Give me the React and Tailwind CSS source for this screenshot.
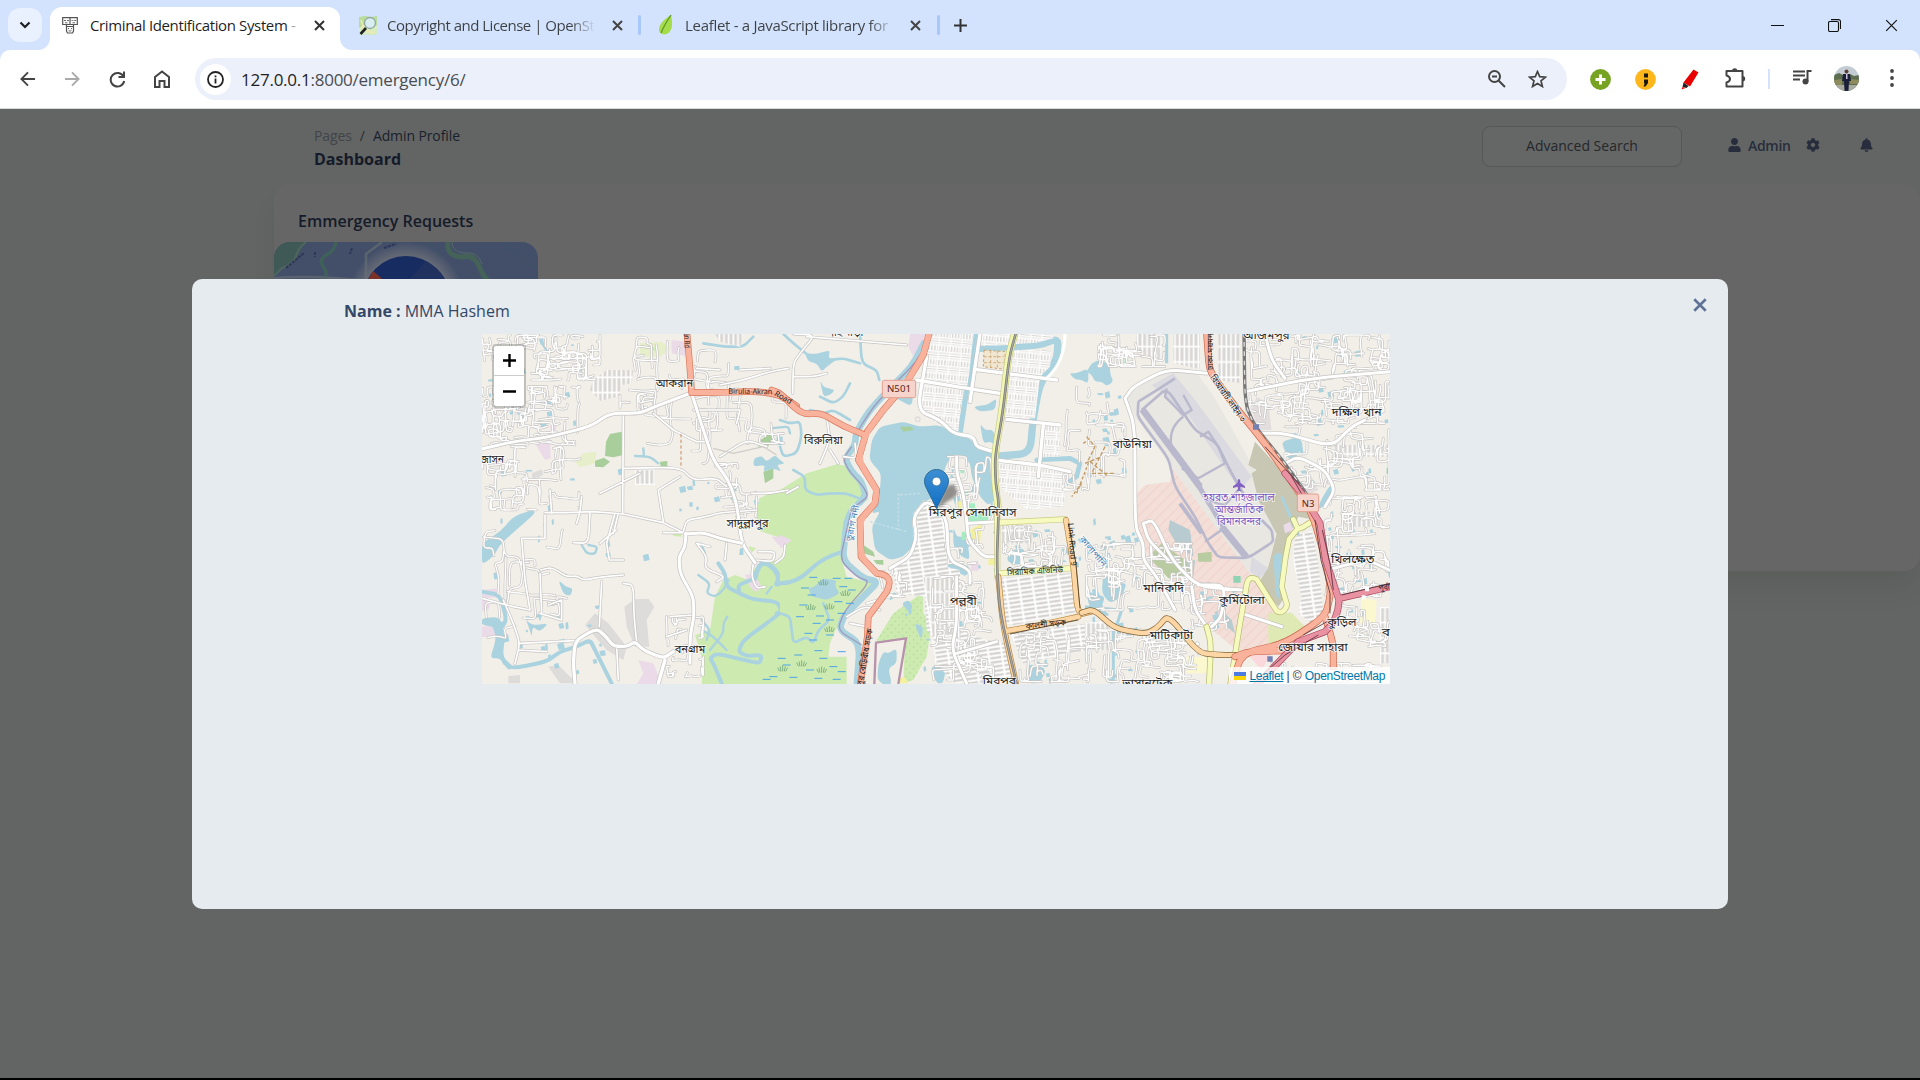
import React from "react";
import { FaUser, FaCog, FaBell } from "react-icons/fa";

/* ---------- deterministic lane generator for the small streets ---------- */
function rng(seed) {
  let s = seed;
  return () => {
    s = (s * 1664525 + 1013904223) % 4294967296;
    return s / 4294967296;
  };
}
function lanes(seed, x0, y0, x1, y1, count, step) {
  const r = rng(seed);
  let d = "";
  for (let i = 0; i < count; i++) {
    let x = x0 + r() * (x1 - x0);
    let y = y0 + r() * (y1 - y0);
    let dir = Math.floor(r() * 4);
    d += `M${x.toFixed(0)} ${y.toFixed(0)}`;
    const n = 3 + Math.floor(r() * 5);
    for (let k = 0; k < n; k++) {
      const len = step * (0.4 + r());
      const j = (r() - 0.5) * step * 0.4;
      if (dir % 2) {
        x += dir === 1 ? len : -len;
        y += j;
      } else {
        y += dir === 0 ? len : -len;
        x += j;
      }
      x = Math.min(x1, Math.max(x0, x));
      y = Math.min(y1, Math.max(y0, y));
      d += `L${x.toFixed(0)} ${y.toFixed(0)}`;
      if (r() < 0.55) dir = (dir + (r() < 0.5 ? 1 : 3)) % 4;
    }
  }
  return d;
}
function ponds(seed, x0, y0, x1, y1, count) {
  const r = rng(seed);
  let d = "";
  for (let i = 0; i < count; i++) {
    const x = x0 + r() * (x1 - x0);
    const y = y0 + r() * (y1 - y0);
    const w = 5 + r() * 14;
    const h = 5 + r() * 16;
    d += `M${x.toFixed(0)} ${y.toFixed(0)}l${w.toFixed(0)} ${(-h / 4).toFixed(0)}l${(w / 4).toFixed(0)} ${h.toFixed(0)}l${(-w).toFixed(0)} ${(h / 5).toFixed(0)}z`;
  }
  return d;
}
/* rounds the corners of straight polylines and polygons */
function soft(d, t = 0.35) {
  return d
    .split("M")
    .filter(Boolean)
    .map((s) => {
      if (/[QHVlhvqACaz]/.test(s)) return "M" + s;
      const closed = s.includes("Z");
      const n = s.match(/-?\d+(\.\d+)?/g).map(Number);
      const p = [];
      for (let i = 0; i + 1 < n.length; i += 2) p.push([n[i], n[i + 1]]);
      if (p.length < 3) return "M" + s;
      const N = p.length;
      const at = (a, b) => `${(a[0] + (b[0] - a[0]) * t).toFixed(1)} ${(a[1] + (b[1] - a[1]) * t).toFixed(1)}`;
      let out = "";
      const from = closed ? 0 : 1;
      const to = closed ? N : N - 1;
      if (!closed) out = `M${p[0][0]} ${p[0][1]}`;
      for (let i = from; i < to; i++) {
        const c = p[i];
        const a = p[(i + N - 1) % N];
        const b = p[(i + 1) % N];
        out += `${out ? "L" : "M"}${at(c, a)}Q${c[0]} ${c[1]} ${at(c, b)}`;
      }
      return out + (closed ? "Z" : `L${p[N - 1][0]} ${p[N - 1][1]}`);
    })
    .join("");
}

const West = ({ children }) => <g transform="translate(-2 -4) scale(.33333)">{children}</g>;
const Mid = ({ children }) => <g transform="translate(298 -4) scale(.33333)">{children}</g>;
const East = ({ children }) => <g transform="translate(603 -4) scale(.33333)">{children}</g>;

const Road = ({ d, w = 6, c = "#fff", k = "#c6c4c2", e = 4 }) => {
  const p = soft(d);
  return (
    <g fill="none" strokeLinejoin="round" strokeLinecap="round">
      <path d={p} stroke={k} strokeWidth={w + e} />
      <path d={p} stroke={c} strokeWidth={w} />
    </g>
  );
};
const Label = ({ x, y, w, children, size = 35, c = "#222", t, halo = "#ffffffcc" }) => (
  <text
    x={x}
    y={y}
    textLength={w}
    lengthAdjust="spacingAndGlyphs"
    fontSize={size}
    fill={c}
    stroke={halo}
    strokeWidth="5"
    paintOrder="stroke"
    transform={t}
  >
    {children}
  </text>
);

const WATER = "#aad3df";
const GREEN = "#cdebb0";
const reeds = [
  [130, 760], [196, 792], [92, 834], [148, 832], [148, 900], [65, 1003], [125, 1022], [8, 1018],
];
const blueDashes = [
  [100, 742], [170, 745], [75, 774], [190, 770], [95, 795], [175, 815], [60, 860], [120, 858], [185, 850],
  [110, 880], [85, 910], [150, 915], [100, 930], [115, 962], [55, 975], [130, 985], [185, 965], [20, 1005],
  [90, 1020], [160, 1010], [185, 1025], [40, 1042], [115, 1045], [170, 1048], [5, 985],
  [205, 745], [215, 780], [210, 820], [150, 870], [70, 825], [-20, 1040], [-40, 1048],
];

function CityMap() {
  return (
    <svg width="908" height="350" viewBox="0 0 908 350" className="block" fontFamily='"Noto Sans Bengali","Noto Sans","Open Sans",sans-serif'>
      <defs>
        <pattern id="gridA" width="34" height="42" patternUnits="userSpaceOnUse" patternTransform="rotate(5)">
          <rect width="34" height="42" fill="#dad8d4" />
          <path d="M0 3H34M3 0V42M12 3V22M21 3V22M30 3V22M3 23H34M3 31H34M3 38H34" stroke="#fff" strokeWidth="4.5" />
        </pattern>
        <pattern id="gridB" width="40" height="13" patternUnits="userSpaceOnUse" patternTransform="rotate(-8)">
          <rect width="40" height="13" fill="#d5d3d0" />
          <path d="M0 4H40M4 0V13" stroke="#fff" strokeWidth="6" />
        </pattern>
        <pattern id="gridC" width="14" height="46" patternUnits="userSpaceOnUse">
          <rect width="14" height="46" fill="#d9d7d3" />
          <path d="M4 0V46M0 4H14" stroke="#fff" strokeWidth="5" />
        </pattern>
        <pattern id="hatch" width="22" height="22" patternUnits="userSpaceOnUse" patternTransform="rotate(45)">
          <rect width="22" height="22" fill="#f3dfd8" />
          <path d="M2 0V22" stroke="#f2cdc8" strokeWidth="2.5" />
        </pattern>
        <pattern id="trees" width="22" height="22" patternUnits="userSpaceOnUse">
          <rect width="22" height="22" fill={GREEN} />
          <circle cx="5" cy="5" r="1.6" fill="#8cbf7c" />
          <circle cx="16" cy="16" r="1.6" fill="#8cbf7c" />
        </pattern>
      </defs>
      <rect width="908" height="350" fill="#f2efe9" />

      {/* land use and water */}
      <West>
        <g fill={GREEN}>
          <path d="M838 505L870 490L935 478V628L895 622L840 603L828 560Z" />
          <path d="M730 750L765 735L800 748L825 715L860 695L900 690L935 640V1080H665L668 990L645 915L690 900L705 800Z" />
          <path d="M576 605L605 600V620L580 618ZM805 648L828 655L815 668Z" />
        </g>
        <path d="M480 40L545 35L570 55L540 80H480ZM285 395L310 370L350 365L345 400L300 412Z" fill="#e6efc9" />
        <path d={soft("M505 35L520 50L535 65L515 60Z")} fill={GREEN} />
        <path d="M390 312L425 305L430 375L400 382L375 378L378 335ZM345 392L372 383L390 395L370 412L345 410ZM540 395L562 393V415L542 412ZM835 335L870 310L882 325L865 348L835 350ZM850 425L880 415V445L855 460Z" fill="#a8cf9b" />
        <g fill="#ebdbe8">
          <path d="M574 30L618 35L615 78L575 70ZM168 345L210 325L212 385L195 390ZM210 285L228 282V305H212ZM875 620L925 620V645L895 645ZM795 735L820 730L848 775L825 785L808 768ZM5 780L50 775L52 802L5 805ZM5 890L45 885L48 915L5 922ZM5 810L35 812L25 840L5 842ZM475 990L520 1000L545 1062H470L490 1030Z" />
        </g>
        <path d="M345 850L385 880L440 950L430 990L380 960L315 885ZM465 808L505 806L523 830L500 870L508 950H465L440 890L433 830ZM205 1010L235 1005L290 1060H240ZM155 430L185 418L190 435L158 448ZM85 1038L120 1035V1060H85Z" fill="#dedcdb" />
        <g fill={WATER}>
          <path d={soft("M5 640L60 605L100 560L160 538L165 550L120 590L80 625L60 645L40 680L5 705Z")} />
          <path d={soft("M5 865L60 860L75 920L68 980L100 1010L85 1022L60 985L30 985L48 930L40 890L5 885Z")} />
          <path d={soft("M235 750L258 770L278 775L272 798L250 792ZM657 625L680 670L675 690ZM822 385L845 378L860 395L885 375L900 390L915 400L890 405L905 425L880 415L850 425L855 405L820 410ZM138 870L150 880L165 885L205 880L180 905L158 890L155 920L148 895ZM300 95L308 100L303 155Z")} />
          <path d="M890 320H908V345H890ZM780 655H790V675H778ZM763 108H778V120H763ZM628 517H638V530H628Z" />
          <path d={ponds(4, 10, 20, 360, 300, 18)} />
          <path d={ponds(18, 590, 450, 830, 540, 10)} />
          <path d={ponds(9, 20, 380, 500, 800, 14)} />
          <path d={ponds(12, 60, 820, 380, 1040, 24)} />
        </g>
        <g fill="none" stroke={WATER} strokeLinejoin="round" strokeLinecap="round">
          <path d="M825 745Q838 680 872 708T890 762L935 758" strokeWidth="15" />
          <path d={soft("M825 745L775 765L778 790L740 770L735 730L715 700M778 790L820 808L890 815L905 840L885 862L790 930L775 965L800 978L845 975L840 1000L790 990L710 970L690 985L700 1000L725 1060M890 850L940 860")} strokeWidth="12" />
          <path d={soft("M655 735L690 760L680 790L705 800L730 780L745 750M665 900L700 920L740 960M690 960L730 910L730 880L742 860M665 870L690 900L680 930M860 790L875 770")} strokeWidth="7" />
          <path d={soft("M5 785L60 795L80 870L60 900M75 1000L100 1015L200 995L240 965L290 950L330 930L345 960L395 1060")} strokeWidth="12" />
          <path d={soft("M305 645L320 670L345 672L352 650L325 645M465 378L510 380L535 400M490 355L492 380M180 30L205 70M875 295L900 292L925 290L930 310")} strokeWidth="7" />
          <path d={soft("M670 40L700 45L740 50L790 50L820 20")} strokeWidth="8" />
        </g>
      </West>
      <Mid>
        <path d="M0 480L80 430L170 403L200 408L260 480L264 510L215 530L200 640L185 690L200 740L280 760L180 870L150 940L145 980L200 980V1080H0V680L20 665L15 640L0 620Z" fill={GREEN} />
        <path d={soft("M85 775L105 770L125 745L170 750L165 770L180 790L140 810L120 805L95 800Z")} fill={WATER} />
        <path d="M290 930L340 850L410 800L412 760L430 762V850L455 880L440 980L400 1050L370 1060L375 925L290 940Z" fill="url(#trees)" />
        <path d={soft("M365 820L385 810L400 830L385 845ZM405 880L430 890L425 930L410 900Z")} fill={WATER} />
        <path d="M390 12L440 12L400 80L385 50Z" fill="#ebdbe8" />
        <g fill={WATER}>
          <path d={soft("M300 290L370 275L420 290L480 285L560 320L600 350L650 370L640 440L655 500L625 525L600 500L575 440L570 400L545 375L520 375L500 400L470 500L430 515L395 570L405 640L370 680L330 690L285 660L275 590L300 545L275 550L300 480L303 430L268 390L275 330Z", 0.25)} />
          <path d={soft("M345 190L400 190L395 230L340 200ZM75 70L110 72L150 60L145 85L175 85L140 110L125 125L110 100L85 95ZM120 150L130 170L145 175L165 180L150 195L130 200ZM868 130L890 130L925 115L925 160L905 150L885 148ZM580 230L620 225L650 205L645 240L600 245ZM600 280L615 300L640 300L655 350L630 335L610 340ZM690 660L735 655L730 700L700 705L680 690ZM500 700L570 705L560 740L530 725L510 730ZM450 1010L500 1000L490 1060L470 1060ZM740 1000L800 1015L780 1060L740 1060ZM520 590L530 620L560 620L570 690L545 680L520 650ZM340 785L355 795L325 815Z")} />
          <path d={ponds(31, 470, 380, 650, 720, 18)} />
          <path d={ponds(32, 700, 580, 925, 720, 18)} />
          <path d={ponds(36, 370, 780, 640, 1050, 14)} />
          <path d={ponds(37, 720, 900, 925, 1050, 8)} />
        </g>
        <path d="M296 940L372 930L350 1060H285Z" fill="#f2efe9" />
        <path d={soft("M310 965L325 970L350 955L350 1000L325 1015L335 1060L320 1070L292 1050L295 1000Z")} fill={WATER} />
        <g fill="none" stroke={WATER} strokeLinejoin="round" strokeLinecap="round">
          <path d={soft("M432 40L395 110L330 175L265 245L228 310L225 345L195 385L215 425L245 455L258 500L215 540L200 575L195 620L188 690L250 745L295 755L250 800L190 860L178 900L240 940L230 1070")} strokeWidth="20" />
          <path d={soft("M590 12L560 180L540 310")} strokeWidth="16" />
          <path d={soft("M600 55L700 50L780 45L835 25L830 90L780 160L760 260L750 370L660 378")} strokeWidth="22" />
          <path d="M770 390L870 385L900 400L890 440L860 460" strokeWidth="14" />
          <path d="M0 760Q50 760 90 720T190 665" strokeWidth="12" />
          <path d={soft("M0 850L30 860L35 900L40 940L80 920L100 940L115 900L150 870L130 820M0 270L30 280L60 275L65 320L50 370L10 380L0 350M40 420L75 440L75 480L110 495L150 490L200 490L250 510M90 240L130 250L160 240L210 270M10 12L40 40L90 80M240 12L245 100L290 120L298 150M150 90L190 85L240 100M120 200L160 220L190 200L210 160")} strokeWidth="8" />
        </g>
        <path d={soft("M448 20L410 95L345 160L280 230L235 300M215 350L190 385L205 420L250 470L265 500L215 536L200 600L180 690L230 740L270 755L195 840L172 900L245 945")} fill="none" stroke="#9d8bb5" strokeWidth="4" opacity=".8" />
        <path d="M360 290H395L400 300L370 305ZM250 645L280 665L285 680L250 670ZM280 690H310V705L290 702Z" fill="#a8cf9b" />
        <circle cx="562" cy="489" r="9" fill="#88e0be" />
        <path d="M565 520H585V575H565ZM600 550H625V575H570ZM545 605H555V630H545ZM670 835H690V850H672ZM540 420H552V430H542Z" fill="#a6ecc2" />
        <path d="M525 515L545 512V540H527ZM570 600L605 580L600 640L575 625ZM625 685H648V705H625ZM690 830H705V845H690ZM355 1045L375 1042L385 1060H355Z" fill="#f3f1a0" />
        <path d="M572 693H595V722H572ZM0 615L35 630L10 650L0 655Z" fill="#ebdbe8" />
      </Mid>
      <East>
        <path d="M118 202L240 118L335 128L390 205L510 420L575 610L555 710L520 745H500L260 410L150 260Z" fill="#e9e7e2" />
        <path d="M510 335L660 500L690 570L640 560L610 620L600 700L590 770L600 800L580 830L520 760L550 710L575 612L520 510L500 430L515 420L490 405Z" fill="#c7c7b4" />
        <path d="M155 490L180 465L255 455L262 415L500 738L590 850L640 880L590 930L470 970L430 940L370 890L330 800L200 700L155 600Z" fill="url(#hatch)" />
        <path d="M550 850L620 848L660 890L600 945L550 940Z" fill="#dfe9b4" />
        <path d="M200 165L265 130L330 210L500 440L465 480L310 255L290 262L240 195Z" fill="#dadae0" />
        <path d="M500 680L550 715L525 745L495 725Z" fill="#dadae0" />
        <g fill="none" stroke="#b9b8cc" strokeLinejoin="round">
          <path d="M172 238L345 470M410 590L485 682" strokeWidth="20" />
          <path d="M330 450L420 600" strokeWidth="14" />
          <path d={soft("M170 240L245 175L330 300L395 340L440 430L480 500M160 215L240 165L270 145M160 215L158 260L250 385L270 470L330 560L370 640L400 682L490 684L565 635L560 600L530 570", 0.2)} strokeWidth="8" />
          <path d="M245 175L240 200L295 255L320 240L295 195M295 260Q240 300 265 375M345 320L370 305L400 350L420 400L340 445L290 415M345 460Q360 520 420 525L460 480M360 635L410 600" strokeWidth="7" />
          <path d="M285 520L350 610" strokeWidth="12" />
        </g>
        <path d="M255 570L315 600L325 680L280 650L250 600ZM280 700L330 690L325 740ZM400 830L440 870L450 910L425 890Z" fill="#b7cbd0" />
        <path d="M230 640L300 690L325 740L250 745L190 680ZM338 670L380 665V695H340Z" fill="#b9cba0" />
        <path d="M445 738H467V758H445ZM905 413H915V432H905Z" fill="#8fd3b4" />
        <path d="M105 70L125 65L133 100L115 110ZM420 108H442V138H420ZM830 820H868V860H840Z" fill="#cfeed2" />
        <path d="M595 585L615 575L625 600L600 610Z" fill="#ebdbe8" />
        <path d="M305 980H370V1030H305ZM830 805L875 810L870 880H825Z" fill="#fbf8d0" />
        <path d="M490 975L560 970L530 1020Z" fill="#fbd8dc" />
        <g fill={WATER}>
          <path d={soft("M5 125L20 100L40 90L75 100L75 130L85 155L65 168L50 155L30 155L20 135ZM565 670L595 670L590 760L578 820L570 760ZM590 335L640 320L655 345L640 370L620 400L600 365ZM55 730L80 735L100 760L125 760L110 800L75 820L50 790ZM0 780L25 790L60 800L50 830L75 860L40 845L20 850ZM735 465L750 480L740 510L700 540L705 515Z")} />
          <path d={ponds(51, 5, 160, 110, 480, 18)} />
          <path d={ponds(52, 600, 20, 910, 460, 30)} />
          <path d={ponds(53, 720, 500, 910, 900, 26)} />
          <path d={ponds(54, 10, 560, 150, 1050, 30)} />
          <path d={ponds(55, 330, 760, 440, 930, 10)} />
        </g>
        <path d="M245 12V100M85 900V1060M0 830L110 840L90 900M590 500L660 660" fill="none" stroke={WATER} strokeWidth="9" />
        <path d="M515 200L550 220L560 300H520L500 240ZM640 470L680 440L700 480L670 495Z" fill="#e3dedd" />
      </East>

      {/* dense street blocks */}
      <West>
        <path d="M340 150L380 120H460L455 160L425 165L415 200L360 212L330 180Z" fill="url(#gridC)" />
        <path d="M465 418H525V465H465ZM705 12H790L780 50L720 35Z" fill="url(#gridC)" />
      </West>
      <Mid>
        <path d="M450 12H580L568 130L560 178L420 155L435 70ZM425 165L548 180L535 305L500 298L412 240ZM600 12H690L685 45L602 48Z" fill="url(#gridA)" />
        <path d="M705 60L815 60L810 110L780 140L765 265L675 265L690 100ZM705 12H820V25L770 38L705 42ZM650 395L865 430L850 530L740 540L670 480L650 450ZM790 285H840V380H780Z" fill="url(#gridA)" />
        <path d="M612 60L675 65V118L610 110Z" fill="#f0e6d2" stroke="#c9a46f" strokeWidth="3" strokeDasharray="8 6" />
        <path d="M632 62V114M652 62V116M612 80H672M612 98H672" stroke="#c9a46f" strokeWidth="2.5" strokeDasharray="8 6" />
        <path d="M400 550L430 510L480 540L505 600L500 710L540 720V900L470 930L440 900L435 800L350 790L340 720L400 660Z" fill="url(#gridB)" />
        <path d="M430 740H530V1000H465L455 880Z" fill="url(#gridC)" />
        <path d="M665 745L870 730L890 845L700 885L675 880ZM455 930L530 900L620 930L680 940L700 1060H520L470 1000ZM690 910L925 880V960L730 1000Z" fill="url(#gridB)" />
        <path d="M665 585H755V640H665Z" fill="url(#gridC)" />
      </Mid>
      <East>
        <path d="M155 12H230V100L150 60ZM265 12H345V118L265 100ZM400 12H465V160L400 150Z" fill="url(#gridC)" />
        <path d="M630 620L680 600L700 700L715 850L680 880L640 850L650 800L625 700Z" fill="url(#gridB)" />
        <path d="M745 345H910V380H760ZM790 545H880V590H780ZM0 880L70 870L75 960L0 960ZM885 830H912V1000H885Z" fill="url(#gridC)" />
      </East>

      {/* lanes */}
      <West>
        <Road d={lanes(3, 8, 15, 360, 150, 38, 26)} w={4} />
        <Road d={lanes(7, 8, 170, 300, 345, 56, 22)} w={4} />
        <Road d={lanes(11, 8, 350, 300, 540, 24, 28)} w={4} />
        <Road d={lanes(13, 420, 20, 610, 240, 12, 30)} w={4} />
        <Road d={lanes(15, 640, 60, 925, 340, 15, 40)} w={4} />
        <Road d={lanes(17, 700, 400, 830, 560, 12, 26)} w={4} />
        <Road d={lanes(21, 10, 600, 260, 950, 14, 40)} w={4} />
        <Road d={lanes(23, 560, 860, 670, 1040, 11, 20)} w={4} />
        <Road d={lanes(27, 440, 180, 690, 400, 5, 44)} w={4} />
        <Road
          w={5}
          d="M195 548H260L340 545L430 552L550 578L610 608M195 555V625H125L135 750L150 840L100 830L5 805M430 250L428 550M405 550L380 640L388 690H430M408 600L360 640M180 730L185 850M182 720L215 712L260 740L290 738L310 750L370 740L430 735M430 760L460 765L462 860L470 935M365 755L358 890M180 850L245 870V810L205 825M430 415L600 412L640 450L710 445L740 470M535 480L550 575M535 480L600 440M360 490L480 430M70 810L100 880L120 940L105 1000M120 940L285 932M115 960L200 965M550 608H610M610 605L620 570L680 560L720 548L830 540M415 550L400 610M210 480L215 550M305 500L300 545L290 580M330 550L325 640L280 638M720 380L800 330L860 350M520 250L580 300L650 335H680M640 240H780L770 280M410 950L415 1050M650 640L680 680L675 715L735 740L710 755M820 700L815 740L830 775L855 770M690 650L650 640M570 860L640 855M560 920L620 900M815 490L870 490L925 480M740 640L735 690M780 120L870 115M720 165L790 150L870 125L925 115M650 115L720 120M885 700L912 680L915 645M835 665L885 665L880 695L830 690"
        />
        <Road w={9} d="M0 358L100 335L200 322L330 290L390 250L480 250L520 232L630 190" />
        <Road w={9} d="M635 190L670 300L700 390L745 450L770 520L785 640L825 698" />
        <Road w={9} d="M615 612L670 608L720 625L785 640M618 610L615 650L597 680L600 730L640 800L642 860L630 920L630 1000" />
        <Road w={10} d="M285 1060L280 1000L285 932L350 895L378 920L400 948L440 950L465 935L490 960L550 985L580 965M555 990L535 1060" />
        <path d="M603 312V415" stroke="#c98b5e" strokeWidth="3" strokeDasharray="10 7" />
        <path d="M700 355L760 370L850 350L890 375" stroke="#cfcbc8" strokeWidth="4" fill="none" />
      </West>
      <Mid>
        <Road w={5} d="M40 12L105 15L60 70L40 100L38 190M80 20L380 45M40 140L100 140L140 130M140 260L150 330L120 400M150 360L175 400M20 490L55 470M200 860L250 830L300 840M210 880L260 890M260 820L330 800M190 380L230 385L225 340" />
        <Road d={lanes(33, 480, 380, 650, 700, 20, 24)} w={4} />
        <Road d={lanes(34, 670, 590, 860, 720, 24, 22)} w={4} />
        <Road d={lanes(35, 450, 740, 640, 1050, 38, 24)} w={4} />
        <Road d={lanes(39, 720, 900, 925, 1055, 26, 26)} w={4} />
        <Road d={lanes(41, 850, 160, 928, 480, 9, 34)} w={4} />
        <Road d={lanes(43, 300, 720, 380, 800, 6, 18)} w={4} />
        <Road w={10} d="M600 12L585 110L570 215M410 150L560 175L660 190M585 118L830 150M680 268L840 285M645 390L780 405L870 425M790 285L775 440M440 80L412 240L480 270L520 310L580 320L590 350L640 365" />
        <Road w={9} d="M530 380L530 430L550 490L560 570L565 630L610 680L645 680M565 580L650 575M330 715L390 680L410 620L400 560L440 510L500 560L505 690L570 720L570 760M530 740L530 880L515 960L560 1060M530 970L650 935" />
        <path d="M855 12Q855 95 800 145" stroke="#fff" strokeWidth="9" fill="none" />
        <circle cx="413" cy="268" r="7" fill="#f2efe9" stroke="#ddd" strokeWidth="4" />
        <path d="M890 490L925 400M905 460L875 500M910 340L925 330" stroke="#c49a63" strokeWidth="4" strokeDasharray="9 6" fill="none" />
        <path d="M355 490V600M270 575L380 605M360 495L420 490" stroke="#c3dfe7" strokeWidth="4" strokeDasharray="8 5" fill="none" />
      </Mid>
      <East>
        <Road d={lanes(61, 485, 15, 912, 280, 96, 24)} w={4} />
        <Road d={lanes(62, 600, 290, 912, 480, 28, 30)} w={4} />
        <Road d={lanes(63, 720, 500, 912, 800, 44, 26)} w={4} />
        <Road d={lanes(64, 5, 640, 320, 840, 52, 26)} w={4} />
        <Road d={lanes(65, 5, 900, 340, 1055, 44, 26)} w={4} />
        <Road d={lanes(66, 320, 760, 430, 900, 12, 26)} w={4} />
        <Road d={lanes(67, 40, 15, 240, 110, 24, 24)} w={4} />
        <Road d={lanes(68, 5, 160, 120, 440, 10, 34)} w={4} />
        <Road d={lanes(69, 560, 1000, 912, 1055, 20, 26)} w={4} />
        <Road d={lanes(70, 770, 820, 912, 950, 12, 24)} w={4} />
        <Road w={9} d="M120 205L145 170L245 118L365 130M120 205L150 290L150 590L175 640L175 690L215 740L270 840M175 580L205 570L260 690L340 770L470 780M175 580L190 630L250 690M320 770L330 840L365 890M480 185L680 145L915 125M540 12L560 90L600 145M520 310L600 310L740 350L800 290L840 270M600 400L640 380L720 420L750 480L720 530M470 850L590 890M340 765L420 765L410 860L380 890M730 720L800 700L850 690L912 720" />
        <path d="M5 320L30 350L10 390L70 440M60 350L20 430H90M0 400L50 380" stroke="#c49a63" strokeWidth="4" strokeDasharray="12 6" fill="none" />
      </East>

      {/* main roads */}
      <West>
        <Road d="M620 0L628 90L635 188M635 188L740 187L830 184L900 195L950 228" w={16} c="#f9b29c" k="#d9775c" />
      </West>
      <Mid>
        <Road d="M705 8L685 80L665 250L643 380L645 460L655 540" w={18} c="#f3f7b4" k="#c9cb83" />
        <Road d="M655 578L855 568M660 730L870 715M652 540L652 740" w={14} c="#f7fabf" k="#c9cb83" />
        <Road d="M858 570L880 700L893 855L940 843M680 903L780 885L895 860M655 740L668 880L710 1070" w={14} c="#fcd6a4" k="#b98a45" />
        <path d="M865 580L888 700L900 835M690 912L780 893L895 870" stroke="#4a3a22" strokeWidth="2.5" fill="none" />
        <path d={soft("M708 8L688 80L668 250L645 380L647 460L657 520L650 700L660 850L712 1070")} stroke="#777" strokeWidth="8" fill="none" />
        <path d={soft("M708 8L688 80L668 250L645 380L647 460L657 520L650 700L660 850L712 1070")} stroke="#a5a5a0" strokeWidth="4" fill="none" />
        <Road d="M448 8L430 75L375 165L310 240L258 310L235 390L290 480L285 520L240 570L243 680L290 730Q345 735 320 785L265 860L262 920L240 1070" w={16} c="#f9b29c" k="#d9775c" />
        <Road d="M-25 180L0 190L50 238L75 252L125 250L190 288L252 314" w={16} c="#f9b29c" k="#d9775c" />
        <path d={soft("M448 8L430 75L375 165L310 240L258 310L235 390L290 480L285 520L240 570L243 680L290 730")} fill="none" stroke="#f9b29c" strokeWidth="16" />
        <path d="M283 1062L288 938L378 925L355 1062" fill="none" stroke="#b793ab" strokeWidth="7" />
        <rect x="307" y="151" width="100" height="52" rx="6" fill="#f6d3cb" stroke="#e3a08f" strokeWidth="3" />
        <text x="321" y="187" fontSize="29" textLength="72" lengthAdjust="spacingAndGlyphs" fill="#5a2616">N501</text>
      </Mid>
      <East>
        <Road d="M625 568L640 600L680 575M635 600L612 628L602 680L590 770L606 825Q595 855 575 843L515 748Q490 735 485 765L465 880L435 1070M365 890L378 940L372 1070" w={14} c="#f7fabf" k="#b5b76f" />
        <Road d="M-10 848L25 838L90 895L180 912L215 895L250 855L340 968L400 975L460 975" w={14} c="#fcd6a4" k="#806536" />
        <path d={soft("M477 8L480 220L510 290L600 400L670 500")} stroke="#777" strokeWidth="10" fill="none" />
        <path d={soft("M477 8L480 220L510 290L600 400L670 500")} stroke="#ddd" strokeWidth="4" strokeDasharray="14 14" fill="none" />
        <Road d="M365 8L372 110L385 140L450 230L540 340L610 440L680 545L725 700L738 790L720 860L600 940L470 970L440 1070M720 860L745 940L745 1010M450 980L490 965L600 962" w={17} c="#f9b29c" k="#c9694c" />
        <Road d="M600 430L650 490L705 580L722 690L762 810Q760 870 720 905L640 935L510 1070M765 805L925 768" w={17} c="#e892a2" k="#a8425c" />
        <path d="M690 570L708 690L735 790V850M712 600L735 700L745 780M620 440L655 500M540 350L650 470M655 915L735 870M520 1045L600 975L700 915M770 795L915 760" stroke="#503138" strokeWidth="2.5" fill="none" />
        <path d="M840 770H852V784H840ZM830 796H842V808H830Z" fill="#fff" />
        <path d="M504 283H522V299H504ZM547 979H563V995H547Z" fill="#7380b0" />
        <rect x="637" y="492" width="64" height="53" rx="5" fill="#f6d3cb" stroke="#e3a08f" strokeWidth="3" />
        <text x="650" y="531" fontSize="29" textLength="38" lengthAdjust="spacingAndGlyphs" fill="#5a2616">N3</text>
        <path d="M462 447Q466 447 466 458L480 469V474L466 470L465 478L470 484L462 482L454 484L459 478L458 470L444 474V469L458 458Q458 447 462 447Z" fill="#8461c4" />
      </East>

      {/* wetland symbols */}
      <Mid>
        {blueDashes.map(([x, y]) => (
          <path key={`${x}-${y}`} d={`M${x - 12} ${y}h24`} stroke="#4aa3e8" strokeWidth="3" />
        ))}
        {reeds.map(([x, y]) => (
          <path key={`${x}-${y}`} d={`M${x} ${y + 6}v-18M${x + 5} ${y + 6}l3 -15M${x - 5} ${y + 6}l-3 -15M${x + 9} ${y + 6}l6 -11M${x - 9} ${y + 6}l-6 -11`} stroke="#6fa57a" strokeWidth="2.5" />
        ))}
      </Mid>

      {/* place names */}
      <West>
        <Label x={527} y={170} w={112}>আকরান</Label>
        <Label x={0} y={398} w={72}>জাসন</Label>
        <Label x={740} y={592} w={126}>সাদুল্লাপুর</Label>
        <Label x={584} y={968} w={92}>বনগ্রাম</Label>
        <Label x={0} y={0} w={52} size={23} halo="none" t="translate(612 2) rotate(88)">ran Rd</Label>
        <Label x={745} y={191} w={132} size={23} halo="none" t="rotate(1 745 191)">Birulia-Akran</Label>
        <Label x={0} y={0} w={56} size={23} halo="none" t="translate(882 195) rotate(30)">Road</Label>
      </West>
      <Mid>
        <Label x={140} y={17} w={110}>শাহপাড়া</Label>
        <Label x={72} y={343} w={116}>বিরুলিয়া</Label>
        <Label x={446} y={559} w={264}>মিরপুর সেনানিবাস</Label>
        <Label x={510} y={824} w={80}>পল্লবী</Label>
        <Label x={608} y={1064} w={100}>মিরপুর</Label>
        <Label x={682} y={736} w={168} size={26} halo="none" t="rotate(-3 682 736)">সিরামিক এভিনিউ</Label>
        <Label x={738} y={898} w={122} size={26} halo="none" t="rotate(-6 738 898)">কালশী সড়ক</Label>
        <Label x={0} y={0} w={128} size={24} halo="none" t="translate(864 580) rotate(86)">Link Road 9</Label>
        <Label x={0} y={0} w={110} size={26} c="#4d80b3" t="translate(215 635) rotate(-78)">তুরাগ নদী</Label>
        <Label x={0} y={0} w={175} size={26} halo="none" t="translate(248 1070) rotate(-80)">পুর বেড়িবাঁধ সড়ক</Label>
      </Mid>
      <East>
        <Label x={474} y={28} w={140}>আজমপুর</Label>
        <Label x={740} y={257} w={150}>দক্ষিণ খান</Label>
        <Label x={83} y={355} w={118}>বাউনিয়া</Label>
        <Label x={738} y={698} w={130}>খিলক্ষেত</Label>
        <Label x={175} y={786} w={122}>মানিকদি</Label>
        <Label x={402} y={822} w={137}>কুর্মিটোলা</Label>
        <Label x={194} y={926} w={130}>মাটিকাটা</Label>
        <Label x={727} y={887} w={87}>কুড়িল</Label>
        <Label x={580} y={962} w={208}>জোয়ার সাহারা</Label>
        <Label x={890} y={919} w={50}>বসু</Label>
        <Label x={112} y={1070} w={150}>ভাসানটেক</Label>
        <Label x={355} y={512} w={214} size={32} c="#7a55c0">হযরত শাহজালাল</Label>
        <Label x={389} y={548} w={146} size={32} c="#7a55c0">আন্তর্জাতিক</Label>
        <Label x={396} y={584} w={132} size={32} c="#7a55c0">বিমানবন্দর</Label>
        <Label x={0} y={0} w={110} size={24} halo="none" t="translate(383 120) rotate(-90)">ঢাকা-ময়মন</Label>
        <Label x={0} y={0} w={165} size={26} t="translate(374 142) rotate(55)">বিআরটি লাইন ৩</Label>
        <Label x={0} y={0} w={110} size={26} c="#4d80b3" t="translate(-18 628) rotate(50)">কালাপানি</Label>
        <Label x={882} y={783} w={60} size={26} halo="none" t="rotate(-8 882 783)">পূর্বাচল</Label>
      </East>

      {/* location marker */}
      <defs>
        <filter id="shade" x="-50%" y="-50%" width="200%" height="200%"><feGaussianBlur stdDeviation="1.5" /></filter>
        <linearGradient id="pin" x1="0" y1="0" x2="0" y2="1"><stop offset="0" stopColor="#3d8fd1" /><stop offset="1" stopColor="#126fc6" /></linearGradient>
      </defs>
      <path d="M455 175L462 156Q470 146 474 154T466 167Z" fill="#000" opacity=".4" filter="url(#shade)" />
      <g transform="translate(442 135)">
        <path d="M12.500.5C5.800.5.500 5.900.500 12.400c0 2.600 1 4.900 2.200 7.300L12.500 39.500l9.800-19.800c1.200-2.400 2.200-4.700 2.200-7.300C24.500 5.900 19.200.5 12.500.5Z" fill="url(#pin)" stroke="#2e6c97" />
        <circle cx="12.500" cy="12.500" r="4.300" fill="#fff" stroke="#2e6c97" strokeWidth=".6" />
      </g>
    </svg>
  );
}

/* ---------- browser chrome ---------- */
const X = ({ c = "#333", s = 11, w = 2 }) => (
  <svg width={s} height={s} viewBox="0 0 11 11" className="shrink-0">
    <path d="M1 1L10 10M10 1L1 10" stroke={c} strokeWidth={w} fill="none" />
  </svg>
);

const FaceIcon = () => (
  <svg width="16" height="17" viewBox="0 0 16 17" className="shrink-0" fill="none" stroke="#555" strokeWidth="1.200">
    <path d="M.7.700H15.300V7.500H.7ZM8 .7V7.500M4.500 9.500H11.500V14L10.500 16H5.500L4.500 14ZM4.500 9.500V7.500M11.500 9.500V7.500" />
    <path d="M2 4L3 3L4 4M5 4L6 3L6.800 4M9.500 4L10.500 3L11.300 4M12.300 4L13.200 3L14 4M3 5.800H5.500M10.500 5.800H13M6 11.500H7M9 11.500H10M6.500 13.300L8 14.300L9.500 13.300" strokeWidth=".9" />
  </svg>
);
const OsmIcon = () => (
  <svg width="18" height="19" viewBox="0 0 18 19" className="shrink-0">
    <path d="M0 1L6 0L12 1L18 0V18L12 19L6 18L0 19Z" fill="#b9dd9a" />
    <path d="M0 12L6 8L12 12L18 9V18L12 19L6 18L0 19Z" fill="#d9ecc0" />
    <path d="M2 4L5 14L15 17" stroke="#f3e9b0" strokeWidth="1.500" fill="none" />
    <path d="M1.500 18L7 12" stroke="#222" strokeWidth="2.600" />
    <circle cx="11" cy="7" r="5.500" fill="#d8eef3" stroke="#8fa8a2" strokeWidth="1.300" />
  </svg>
);
const LeafIcon = () => (
  <svg width="15" height="20" viewBox="0 0 15 20" className="shrink-0">
    <path d="M13 0C14.500 6 15 13 11.500 17C8.500 20.500 3.500 20 1.500 17C-1 11 6 4 13 0Z" fill="#a4dc4a" />
    <path d="M13 0C9 6 5.500 12 3 18" stroke="#5f9a2b" strokeWidth="1.300" fill="none" />
  </svg>
);

function TabStrip() {
  return (
    <div className="flex h-[50px] bg-[#d3e3fd] pl-2">
      <button className="mt-2 flex h-[34px] w-[34px] items-center justify-center rounded-xl bg-[#e9f0fe]">
        <svg width="12" height="8" viewBox="0 0 12 8"><path d="M1.500 1.500L6 6L10.500 1.500" stroke="#1f1f1f" strokeWidth="2.200" fill="none" /></svg>
      </button>
      <div className="relative ml-2 mt-[7px] flex h-[43px] w-[290px] items-center rounded-t-xl bg-white pb-[6px] pl-3 pr-[15px]">
        <svg width="12" height="12" className="absolute -left-3 bottom-0"><path d="M12 0V12H0A12 12 0 0 0 12 0Z" fill="#fff" /></svg>
        <svg width="12" height="12" className="absolute -right-3 bottom-0"><path d="M0 0V12H12A12 12 0 0 1 0 0Z" fill="#fff" /></svg>
        <FaceIcon />
        <span className="ml-3 w-[212px] overflow-hidden whitespace-nowrap text-[15px] tracking-[-0.37px] text-[#1f1f1f]">
          Criminal Identification System <span className="text-[#aaa]">-</span>
        </span>
        <span className="ml-auto"><X /></span>
      </div>
      <div className="mt-[7px] flex h-[36px] w-[301px] items-center pl-[19px]">
        <OsmIcon />
        <span className="ml-[10px] w-[208px] overflow-hidden whitespace-nowrap bg-gradient-to-r from-[#3c4043] from-88% to-[#d3e3fd] to-100% bg-clip-text text-[15px] tracking-[-0.5px] text-transparent">
          Copyright and License | OpenStr
        </span>
        <span className="ml-[17px]"><X c="#444" /></span>
        <span className="ml-auto h-5 w-[3px] rounded bg-[#a8c7fa]" />
      </div>
      <div className="mt-[7px] flex h-[36px] w-[299px] items-center pl-[17px]">
        <LeafIcon />
        <span className="ml-[12px] w-[209px] overflow-hidden whitespace-nowrap bg-gradient-to-r from-[#3c4043] from-88% to-[#d3e3fd] to-100% bg-clip-text text-[15px] tracking-[-0.3px] text-transparent">
          Leaflet - a JavaScript library for
        </span>
        <span className="ml-[16px]"><X c="#444" /></span>
        <span className="ml-auto h-5 w-[3px] rounded bg-[#a8c7fa]" />
      </div>
      <svg width="13" height="13" viewBox="0 0 13 13" className="ml-[14px] mt-[19px]"><path d="M6.500 0V13M0 6.500H13" stroke="#333" strokeWidth="2" /></svg>
      <div className="ml-auto mr-[22px] flex items-center gap-[44px]">
        <svg width="13" height="13"><path d="M0 6.500H13" stroke="#111" /></svg>
        <svg width="13" height="13" fill="none" stroke="#111" strokeWidth="1.100"><rect x=".5" y="2.500" width="10" height="10" rx="1.500" /><path d="M3 .6H10.500Q12.500.6 12.500 2.600V10" /></svg>
        <X s={13} w={1} c="#111" />
      </div>
    </div>
  );
}

function Toolbar() {
  return (
    <div className="bg-[#d3e3fd]">
      <div className="flex h-[59px] items-center rounded-t-[10px] border-b border-[#d5d9d8] bg-white pl-[20px]">
        <svg width="16" height="16" viewBox="0 0 17 16" fill="none" stroke="#444" strokeWidth="2"><path d="M16 8H2M8.500 1L1.500 8L8.500 15" /></svg>
        <svg width="16" height="16" viewBox="0 0 17 16" fill="none" stroke="#aaa" strokeWidth="2" className="ml-[28px]"><path d="M1 8H15M8.500 1L15.500 8L8.500 15" /></svg>
        <svg width="17" height="17" viewBox="0 0 17 17" fill="none" stroke="#444" strokeWidth="2" className="ml-[29px]"><path d="M14.500 5.500A6.800 6.800 0 1 0 15.200 10M15 .5V6H9.500" /></svg>
        <svg width="16" height="18" viewBox="0 0 16 18" fill="none" stroke="#444" strokeWidth="2" className="ml-[28px]"><path d="M1 7L8 1.500L15 7V17H10.500V11H5.500V17H1Z" /></svg>
        <div className="ml-[25px] flex h-[42px] w-[1372px] items-center rounded-full bg-[#ecf0fa] pl-[5px] pr-[20px]">
          <span className="flex h-[31px] w-[31px] items-center justify-center rounded-full bg-white">
            <svg width="17" height="17" viewBox="0 0 17 17" fill="none" stroke="#222" strokeWidth="1.800"><circle cx="8.500" cy="8.500" r="7.500" /><path d="M8.500 7.500V12.500M8.500 4.500V6.300" /></svg>
          </span>
          <span className="ml-[10px] mt-px text-[17px] tracking-[-0.25px] text-[#4a4d50]"><span className="text-[#1f1f1f]">127.0.0.1</span>:8000/emergency/6/</span>
          <svg width="18" height="18" viewBox="0 0 18 18" fill="none" stroke="#444" strokeWidth="2" className="ml-auto"><circle cx="6.500" cy="6.500" r="5.500" /><path d="M10.500 10.500L17 17M4 6.500H9" /></svg>
          <svg width="19" height="18" viewBox="0 0 19 18" fill="none" stroke="#444" strokeWidth="1.700" className="ml-[22px]"><path d="M9.500 1.500L11.700 6.600L17.500 7.100L13 10.800L14.400 16.500L9.500 13.500L4.600 16.500L6 10.800L1.500 7.100L7.300 6.600Z" /></svg>
        </div>
        <svg width="21" height="21" className="ml-[23px]"><circle cx="10.500" cy="10.500" r="10.400" fill="#77a323" /><path d="M10.500 5.500V15.500M5.500 10.500H15.500" stroke="#fff" strokeWidth="3" /></svg>
        <svg width="21" height="21" className="ml-6"><circle cx="10.500" cy="10.500" r="10.400" fill="#fdb71d" /><path d="M9 4.500H13V8.500H9ZM9 10.500H13V14L10.500 17.500H8.500L9.800 14.500H9Z" fill="#1c1809" /></svg>
        <svg width="18" height="21" viewBox="0 0 18 21" className="ml-[25px]"><path d="M12.500.5L17.500 3.500L9 17.500L2.500 13.500Z" fill="#e80000" /><path d="M2.500 13.500L7.500 17L5.500 19L1.500 18Z" fill="#222" /><path d="M1.500 18L4.500 19L.5 20.500Z" fill="#e80000" /></svg>
        <svg width="21" height="21" viewBox="0 0 21 21" fill="none" stroke="#444" strokeWidth="2" className="ml-[26px] mb-1"><path d="M1.500 4H17.500V19.500H1.500V15.500Q5 14.500 5 12T1.500 8.500Z" strokeLinejoin="round" /><path d="M7 4A2.700 2.700 0 0 1 12.400 4ZM17.500 9A2.700 2.700 0 0 1 17.500 14.400Z" fill="#444" stroke="none" /></svg>
        <span className="ml-[22px] h-5 w-[2px] bg-[#d3e3fd]" />
        <svg width="19" height="15" viewBox="0 0 19 15" className="ml-[23px] mb-1"><path d="M0 1.500H12M0 5.500H12M0 9.500H7" stroke="#444" strokeWidth="1.800" /><path d="M14.500 11.500V1H18.500" stroke="#444" strokeWidth="2" fill="none" /><circle cx="12.500" cy="11.500" r="3" fill="#444" /></svg>
        <svg width="25" height="25" viewBox="0 0 25 25" className="ml-[22px] mb-[2px]">
          <clipPath id="av"><circle cx="12.500" cy="12.500" r="12.500" /></clipPath>
          <g clipPath="url(#av)">
            <rect width="25" height="25" fill="#c3ccd2" />
            <path d="M0 9L5 7L9 9L16 8L20 10L25 9V25H0Z" fill="#5d6e50" />
            <path d="M0 14L8 13V19H0ZM16 13L25 14V18H16Z" fill="#8d8a5c" />
            <path d="M0 19H25V25H0Z" fill="#a9aba3" />
            <path d="M9 8H16L17 15H15L14.500 25H10.500L10 15H8Z" fill="#1b2038" />
            <circle cx="12.500" cy="5.500" r="2" fill="#5c4038" />
            <path d="M12 8H13.500V13H12Z" fill="#cdbfd8" />
          </g>
        </svg>
        <svg width="4" height="18" className="ml-[31px] mb-[2px]" fill="#444"><circle cx="2" cy="2" r="1.900" /><circle cx="2" cy="9" r="1.900" /><circle cx="2" cy="16" r="1.900" /></svg>
      </div>
    </div>
  );
}

/* ---------- page below the dialog ---------- */
function Dashboard() {
  return (
    <div className="pl-[274px] font-['Open_Sans',sans-serif]">
      <header className="flex h-[75px] items-start pl-10 pr-[47px]">
        <div className="pt-[17px] text-[#16191f]">
          <div className="flex h-5 items-center gap-2 text-sm tracking-[-0.1px]"><span className="text-[#41444a]">Pages</span><span className="text-[#292c33]">/</span><span className="text-[#191f2d]">Admin Profile</span></div>
          <h6 className="mt-[2px] text-base font-bold leading-[22px] text-[#151b29]">Dashboard</h6>
        </div>
        <button className="ml-auto mt-[17px] h-[41px] w-[200px] rounded-lg border border-[#545858] bg-[#656666] pb-[2px] text-sm text-[#24282b]">Advanced Search</button>
        <div className="ml-[46px] mt-[26px] flex h-5 items-center text-[14px] font-semibold text-[#272d3c]">
          <FaUser className="h-[14px] w-[13px]" />
          <span className="ml-[7px] w-[42px] tracking-[-0.3px]">Admin</span>
          <FaCog className="ml-4 h-[14px] w-[14px]" />
          <FaBell className="ml-10 h-[14px] w-[13px]" />
        </div>
      </header>
      <section className="h-[387px] rounded-2xl bg-[#666] pt-[26px] shadow-[0_20px_27px_0_rgba(0,0,0,0.06)]">
        <h6 className="pl-6 text-base font-semibold leading-[22px] text-[#151b29]">Emmergency Requests</h6>
        <svg width="264" height="150" viewBox="0 0 264 150" className="mt-[10px] rounded-2xl">
          <defs>
            <radialGradient id="glow"><stop offset=".7" stopColor="#6d7078" /><stop offset="1" stopColor="#6d7078" stopOpacity="0" /></radialGradient>
          </defs>
          <rect width="264" height="150" fill="#434f69" />
          <path d="M0 0H30Q26 16 14 22T0 36Z" fill="#3f5956" />
          <g fill="none" strokeLinejoin="round">
            <path d="M32 0Q24 6 22 14T8 26L0 34" stroke="#4f665f" strokeWidth="2" />
            <path d="M62 0Q60 10 52 13Q44 18 50 26T46 38" stroke="#40605a" strokeWidth="3.500" />
            <path d="M108 0L92 12V40M0 36Q30 34 60 36T92 38" stroke="#59646f" strokeWidth="2.500" />
            <path d="M174 0Q172 14 188 15Q200 12 205 24T214 38" stroke="#456259" strokeWidth="5" />
            <path d="M178 0Q178 10 190 11Q204 9 208 22" stroke="#57696a" strokeWidth="1" />
            <path d="M226 0L264 28M142 0V16M156 0Q158 10 168 14" stroke="#3d5564" />
          </g>
          <circle cx="132" cy="58" r="58" fill="url(#glow)" />
          <circle cx="132" cy="57" r="43" fill="#172c60" />
          <path d="M152 19L118 56H175Q176 32 152 19Z" fill="#20315f" />
          <path d="M99 29L112 40L90 60V45Z" fill="#7b3028" />
          <path d="M12 26L30 11M78 6L76 12M41 10V15M110 6L122 2" stroke="#2d3658" strokeWidth="2" strokeDasharray="3 1" />
        </svg>
      </section>
    </div>
  );
}

function MapDialog() {
  return (
    <div role="dialog" className="absolute left-[192px] top-[170px] h-[630px] w-[1536px] rounded-[10px] bg-[#e6ebef] font-['Open_Sans',sans-serif]">
      <div className="flex h-[55px] items-start justify-between pl-[152px] pr-[21px] pt-[20px]">
        <p className="text-base leading-6 text-[#344767]"><b>Name :</b> MMA Hashem</p>
        <span className="mt-[-1px]"><X s={14} c="#5f7196" w={2} /></span>
      </div>
      <div className="relative ml-[290px] h-[350px] w-[908px] overflow-hidden">
        <CityMap />
        <div className="absolute left-[10px] top-[10px] flex w-[34px] flex-col overflow-hidden rounded border-2 border-black/20 bg-white bg-clip-padding">
          <button className="flex h-[30px] items-center justify-center border-b border-[#ccc]">
            <svg width="13" height="13"><path d="M6.500 0V13M0 6.500H13" stroke="#000" strokeWidth="2.400" /></svg>
          </button>
          <button className="flex h-[30px] items-center justify-center pl-px">
            <svg width="13" height="3"><path d="M0 1.500H13" stroke="#000" strokeWidth="2.400" /></svg>
          </button>
        </div>
        <div className="absolute bottom-0 right-0 flex h-[17px] items-center bg-white/80 px-[5px] font-['Liberation_Sans',sans-serif] text-[12px] text-[#333]">
          <svg width="12" height="8" className="mr-[3px]"><rect width="12" height="4" fill="#4c7be1" /><rect y="4" width="12" height="4" fill="#ffd500" /></svg>
          <span className="tracking-[-0.3px] text-[#0078a8] underline">Leaflet</span>
          <span className="whitespace-pre tracking-[-0.1px]"> | © </span>
          <span className="tracking-[-0.35px] text-[#0078a8]">OpenStreetMap</span>
        </div>
      </div>
    </div>
  );
}

export default function App() {
  return (
    <div className="flex h-[1080px] w-[1920px] flex-col overflow-hidden bg-[#626563] font-['Open_Sans','Noto_Sans',sans-serif]">
      <TabStrip />
      <Toolbar />
      <main className="relative flex-1 overflow-hidden bg-[#626563]">
        <Dashboard />
        <MapDialog />
      </main>
      <div className="h-[2px] bg-black" />
    </div>
  );
}
